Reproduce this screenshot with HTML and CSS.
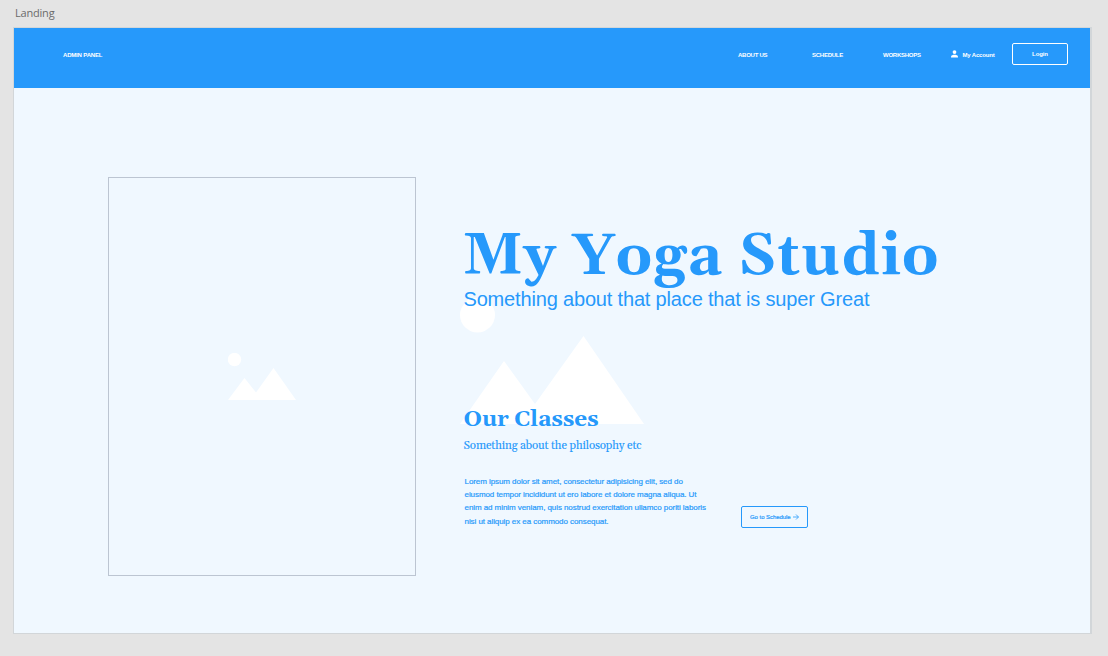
FILE: index.html
```html
<!DOCTYPE html>
<html lang="en">
<head>
<meta charset="utf-8">
<title>Landing</title>
<link rel="stylesheet" href="styles.css">
</head>
<body>
<div class="label">Landing</div>
<div class="artboard">
  <header class="header">
    <a class="admin">ADMIN PANEL</a>
    <nav class="nav">
      <a class="about">ABOUT US</a>
      <a class="schedule">SCHEDULE</a>
      <a class="workshops">WORKSHOPS</a>
    </nav>
    <a class="account">
      <svg class="person" viewBox="0 0 7 8"><circle cx="3.5" cy="2.1" r="1.9"/><path d="M0 7.4V6.5C0 5.2 2 4.7 3.5 4.7S7 5.2 7 6.5V7.4Z"/></svg>
      My Account
    </a>
    <a class="login">Login</a>
  </header>
  <main class="hero">
    <div class="picture">
      <svg class="landscape" viewBox="0 0 68 47"><circle cx="6.5" cy="6.5" r="6.7"/><path d="M0 47L16.5 25L28 39.5L45.5 15L68 47Z"/></svg>
    </div>
    <div class="copy">
      <svg class="backdrop" viewBox="0 0 184 126"><circle cx="17.5" cy="17" r="17.5"/><path d="M0 126L44 63L75 106L123.5 38L184 126Z"/></svg>
      <h1 class="title">My Yoga Studio</h1>
      <p class="tagline">Something about that place that is super Great</p>
      <h2 class="subtitle">Our Classes</h2>
      <p class="philosophy">Something about the philosophy etc</p>
      <div class="row">
        <p class="body">Lorem ipsum dolor sit amet, consectetur adipisicing elit, sed do<br>eiusmod tempor incididunt ut ero labore et dolore magna aliqua. Ut<br>enim ad minim veniam, quis nostrud exercitation ullamco poriti laboris<br>nisi ut aliquip ex ea commodo consequat.</p>
        <a class="goto">Go to Schedule<svg class="arrow" viewBox="0 0 6 6"><path d="M0 3H5.4M3 .5L5.5 3L3 5.5"/></svg></a>
      </div>
    </div>
  </main>
</div>
</body>
</html>
```
FILE: styles.css
```css
* { box-sizing: border-box; }
body {
  margin: 0;
  height: 656px;
  overflow: hidden;
  background: #e4e4e4;
  font-family: "Liberation Sans", Arial, sans-serif;
}
h1, h2, p { margin: 0; font-weight: normal; }
svg { display: block; flex: none; }
a { white-space: nowrap; }
.label {
  height: 27px;
  padding-left: 15px;
  font: 11px/26px "Open Sans", sans-serif;
  letter-spacing: -.2px;
  color: #6b6b6b;
}
.artboard {
  width: 1079px;
  height: 607px;
  margin-left: 13px;
  border: 1px solid #d2d6d9;
  border-right-width: 2px;
  background: #f0f8ff;
}
.header {
  display: flex;
  align-items: center;
  height: 60px;
  padding: 0 22px 8px 49px;
  background: #2699fb;
  color: #fff;
  font-size: 6px;
  font-weight: bold;
}
.admin { margin-right: auto; padding-top: 2px; letter-spacing: -.18px; }
.nav { display: flex; padding-top: 2px; letter-spacing: -.25px; }
.about { width: 74px; }
.schedule { width: 71px; }
.workshops { width: 67.5px; }
.account { display: flex; align-items: center; width: 61.5px; gap: 5px; padding-top: 2px; letter-spacing: -.18px; }
.person { width: 7px; height: 8px; margin-top: -2px; fill: #fff; }
.login {
  width: 56px;
  height: 22px;
  border: 1px solid #fff;
  border-radius: 2px;
  line-height: 21px;
  text-align: center;
  letter-spacing: -.1px;
}
.hero { display: flex; padding: 89px 0 0 94px; gap: 48px; }
.picture {
  width: 308px;
  height: 399px;
  border: 1px solid #bcc5d2;
  padding: 175px 0 0 119px;
}
.landscape { width: 68px; height: 47px; fill: #fff; }
.copy { position: relative; padding-top: 43px; color: #2699fb; }
.copy > * { position: relative; white-space: nowrap; }
.copy > .backdrop {
  position: absolute;
  left: -4.5px;
  top: 120.5px;
  width: 184px;
  height: 126px;
  fill: #fff;
}
.title, .subtitle, .philosophy { font-family: Georgia, Gelasio, "Liberation Serif", serif; }
.title { height: 67px; margin-left: -1px; font-size: 58px; line-height: 74px; font-weight: bold; letter-spacing: .86px; }
.tagline { height: 24px; margin-left: -.5px; font-size: 20px; line-height: 24px; letter-spacing: -.17px; }
.subtitle { margin: 95px 0 0 -.5px; height: 29px; font-size: 22.5px; line-height: 27px; font-weight: bold; letter-spacing: -.07px; }
.philosophy { margin: 1px 0 0 -.5px; height: 20px; font-size: 11.5px; line-height: 20px; letter-spacing: -.13px; -webkit-text-stroke: .1px #2699fb; }
.row { display: flex; margin-top: 19px; }
.body { width: 277px; padding-left: .5px; font-size: 8px; line-height: 13.2px; letter-spacing: -.07px; -webkit-text-stroke: .2px #2699fb; }
.goto {
  display: flex;
  align-items: center;
  gap: 2px;
  width: 67px;
  height: 22px;
  margin-top: 31px;
  padding-left: 8px;
  border: 1px solid #2699fb;
  border-radius: 2px;
  font-size: 6px;
  letter-spacing: -.05px;
  -webkit-text-stroke: .2px #2699fb;
}
.arrow { width: 6px; height: 6px; fill: none; stroke: #2699fb; stroke-width: .8; }
```
